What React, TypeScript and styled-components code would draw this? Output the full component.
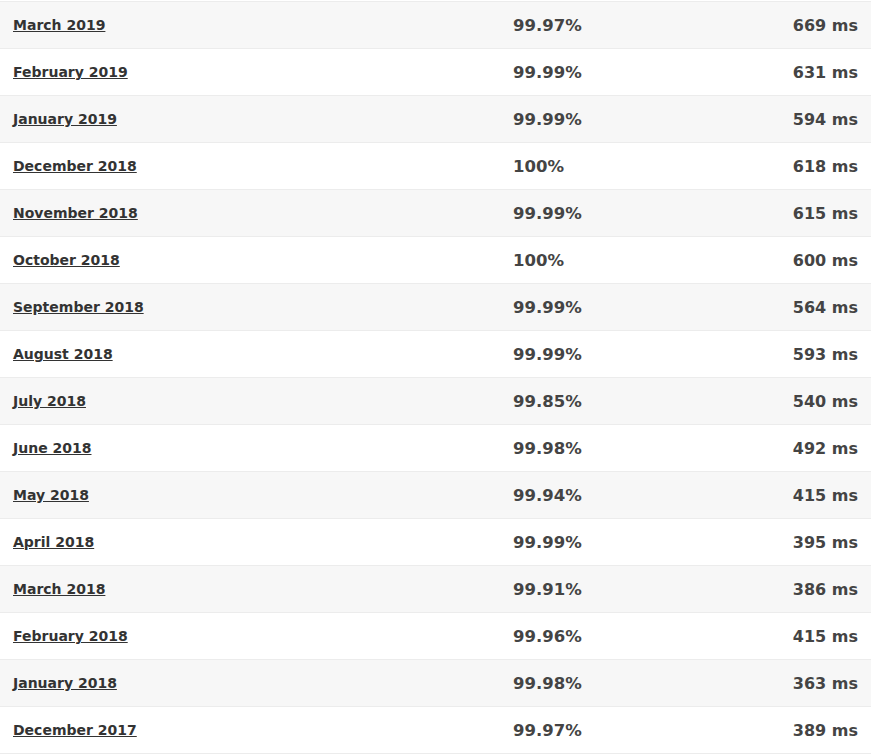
import React from "react";
import styled, { createGlobalStyle } from "styled-components";

const Global = createGlobalStyle`
  html, body { margin: 0; padding: 0; background: #fff; }
  body { font-family: "DejaVu Sans", Verdana, sans-serif; }
`;

const Wrap = styled.div`
  padding-top: 1px;
`;

const Table = styled.div`
  display: flex;
  flex-direction: column;
  border-top: 1px solid #ececec;
`;

const Row = styled.div<{ $alt: boolean }>`
  display: grid;
  grid-template-columns: 500px 1fr auto;
  align-items: center;
  height: 46px;
  border-bottom: 1px solid #ececec;
  background: ${(p) => (p.$alt ? "#f7f7f7" : "#ffffff")};
  padding: 0 13px;
  font-size: 15px;
  font-weight: bold;
  color: #444;
`;

const Month = styled.span`
  font-size: 15px;
`;

const MonthLink = styled.a`
  color: #333;
  text-decoration: underline;
  font-size: 14px;
`;

const Uptime = styled.span`
  font-size: 16.5px;
`;

const Response = styled.span`
  font-size: 16px;
  text-align: right;
`;

const data: [string, string, string][] = [
  ["March 2019", "99.97%", "669 ms"],
  ["February 2019", "99.99%", "631 ms"],
  ["January 2019", "99.99%", "594 ms"],
  ["December 2018", "100%", "618 ms"],
  ["November 2018", "99.99%", "615 ms"],
  ["October 2018", "100%", "600 ms"],
  ["September 2018", "99.99%", "564 ms"],
  ["August 2018", "99.99%", "593 ms"],
  ["July 2018", "99.85%", "540 ms"],
  ["June 2018", "99.98%", "492 ms"],
  ["May 2018", "99.94%", "415 ms"],
  ["April 2018", "99.99%", "395 ms"],
  ["March 2018", "99.91%", "386 ms"],
  ["February 2018", "99.96%", "415 ms"],
  ["January 2018", "99.98%", "363 ms"],
  ["December 2017", "99.97%", "389 ms"],
];

export default function App() {
  return (
    <Wrap>
      <Global />
      <Table>
        {data.map(([m, u, r], i) => (
          <Row key={m} $alt={i % 2 === 0}>
            <Month>
              <MonthLink href="#">{m}</MonthLink>
            </Month>
            <Uptime>{u}</Uptime>
            <Response>{r}</Response>
          </Row>
        ))}
      </Table>
    </Wrap>
  );
}
